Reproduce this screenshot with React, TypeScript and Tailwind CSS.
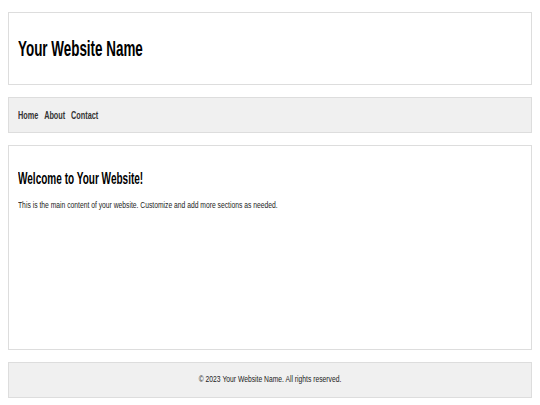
export default function App() {
  return (
    <div
      className="min-h-[405px] w-[540px] bg-white px-2 pt-3 pb-1 flex flex-col gap-3 text-black"
      style={{ fontFamily: '"Liberation Sans", Arial, sans-serif' }}
    >
      {/* Header */}
      <header className="h-[73px] border border-[#dddddd] bg-white px-[9px] flex items-center">
        <h1 className="text-[22px] font-bold leading-none whitespace-nowrap inline-block origin-left scale-x-[0.61]">
          Your Website Name
        </h1>
      </header>

      {/* Nav */}
      <nav className="h-[36px] border border-[#dddddd] bg-[#f0f0f0] px-[9px] flex items-center text-[10px] font-bold text-[#333333]">
        <div className="flex gap-[8px] whitespace-nowrap origin-left scale-x-[0.73]">
          <a href="#">Home</a>
          <a href="#">About</a>
          <a href="#">Contact</a>
        </div>
      </nav>

      {/* Main */}
      <main className="h-[205px] border border-[#dddddd] bg-white px-[9px] pt-[24px]">
        <h2 className="text-[17px] font-bold leading-none whitespace-nowrap origin-left scale-x-[0.59]">
          Welcome to Your Website!
        </h2>
        <p className="mt-[14px] text-[9px] leading-none text-[#222222] whitespace-nowrap origin-left scale-x-[0.75]">
          This is the main content of your website. Customize and add more sections as needed.
        </p>
      </main>

      {/* Footer */}
      <footer className="h-[36px] border border-[#dddddd] bg-[#f0f0f0] flex items-center justify-center text-[9px] text-[#222222]">
        <span className="whitespace-nowrap scale-x-[0.75]">© 2023 Your Website Name. All rights reserved.</span>
      </footer>
    </div>
  );
}
